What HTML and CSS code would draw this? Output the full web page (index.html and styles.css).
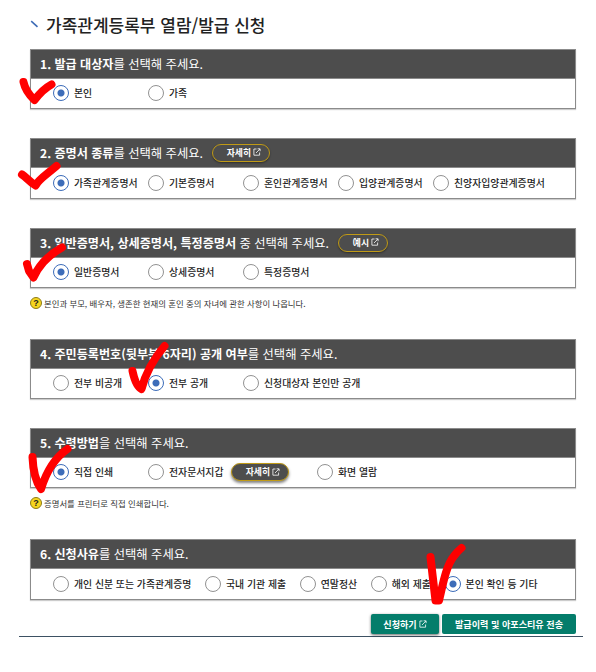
FILE: index.html
```html
<!DOCTYPE html>
<html lang="ko">
<head>
    <meta charset="UTF-8">
    <meta name="viewport" content="width=device-width, initial-scale=1.0">
    <title>가족관계등록부 열람/발급 신청</title>
    <link rel="stylesheet" href="styles.css">
</head>
<body>
    <svg class="defs" width="0" height="0">
        <symbol id="popup" viewBox="0 0 8 8">
            <path d="M3.5 1H.9v6.2h5.7V4.5M4.6.8h2.5v2.4M3 5l3.9-4" fill="none" stroke="currentColor" stroke-width=".8"/>
        </symbol>
    </svg>

    <form class="page">
        <h1>
            <svg class="title-mark" viewBox="0 0 9 8"><path d="M1.2 1.2L7.5 6.8" stroke="#3c6ab5" stroke-width="1.6"/></svg>
            가족관계등록부 열람/발급 신청
        </h1>

        <section class="step step-1">
            <h2><span><strong>1. 발급 대상자</strong>를 선택해 주세요.</span></h2>
            <div class="options">
                <label class="option"><input type="radio" name="target" checked>본인</label>
                <label class="option"><input type="radio" name="target">가족</label>
            </div>
        </section>

        <section class="step step-2">
            <h2>
                <span><strong>2. 증명서 종류</strong>를 선택해 주세요.</span>
                <button type="button" class="pill">자세히 <svg class="popup"><use href="#popup"/></svg></button>
            </h2>
            <div class="options">
                <label class="option"><input type="radio" name="kind" checked>가족관계증명서</label>
                <label class="option"><input type="radio" name="kind">기본증명서</label>
                <label class="option"><input type="radio" name="kind">혼인관계증명서</label>
                <label class="option"><input type="radio" name="kind">입양관계증명서</label>
                <label class="option"><input type="radio" name="kind">친양자입양관계증명서</label>
            </div>
        </section>

        <section class="step step-3">
            <h2>
                <span><strong>3. 일반증명서, 상세증명서, 특정증명서</strong> 중 선택해 주세요.</span>
                <button type="button" class="pill pill-short">예시 <svg class="popup"><use href="#popup"/></svg></button>
            </h2>
            <div class="options">
                <label class="option"><input type="radio" name="detail" checked>일반증명서</label>
                <label class="option"><input type="radio" name="detail">상세증명서</label>
                <label class="option"><input type="radio" name="detail">특정증명서</label>
            </div>
        </section>
        <p class="note"><span class="help">?</span>본인과 부모, 배우자, 생존한 현재의 혼인 중의 자녀에 관한 사항이 나옵니다.</p>

        <section class="step step-4">
            <h2><span><strong>4. 주민등록번호(뒷부분 6자리) 공개 여부</strong>를 선택해 주세요.</span></h2>
            <div class="options">
                <label class="option"><input type="radio" name="open">전부 비공개</label>
                <label class="option"><input type="radio" name="open" checked>전부 공개</label>
                <label class="option"><input type="radio" name="open">신청대상자 본인만 공개</label>
            </div>
        </section>

        <section class="step step-5">
            <h2><span><strong>5. 수령방법</strong>을 선택해 주세요.</span></h2>
            <div class="options">
                <label class="option"><input type="radio" name="receive" checked>직접 인쇄</label>
                <label class="option option-wallet"><input type="radio" name="receive">전자문서지갑</label>
                <button type="button" class="pill pill-light">자세히 <svg class="popup"><use href="#popup"/></svg></button>
                <label class="option"><input type="radio" name="receive">화면 열람</label>
            </div>
        </section>
        <p class="note"><span class="help">?</span>증명서를 프린터로 직접 인쇄합니다.</p>

        <section class="step step-6">
            <h2><span><strong>6. 신청사유</strong>를 선택해 주세요.</span></h2>
            <div class="options options-reason">
                <label class="option"><input type="radio" name="reason">개인 신분 또는 가족관계증명</label>
                <label class="option"><input type="radio" name="reason">국내 기관 제출</label>
                <label class="option"><input type="radio" name="reason">연말정산</label>
                <label class="option"><input type="radio" name="reason">해외 제출</label>
                <label class="option"><input type="radio" name="reason" checked>본인 확인 등 기타</label>
            </div>
        </section>

        <div class="actions">
            <button type="button" class="btn btn-apply">신청하기 <svg class="popup"><use href="#popup"/></svg></button>
            <button type="button" class="btn btn-history">발급이력 및 아포스티유 전송</button>
        </div>
    </form>

    <!-- 손으로 그린 체크 표시 -->
    <svg class="marks" viewBox="0 0 596 672">
        <path d="M23.5 82C25 89 28 94 34.5 100C40 93 45 88 51.5 84.5"/>
        <path d="M22 174.500C26 177 30 182 35.500 185.500C39 179 46 175 56.500 166"/>
        <path d="M27 264L29 271L33.500 277.500C38 267 47 256 62 247.500"/>
        <path d="M132.500 371C134 378 137 387 141.500 389C144 379 151 362 164.500 346"/>
        <path d="M32.500 457C33 470 36 482 41 489C45 476 53 459 67.500 449"/>
        <path d="M430.500 557C432 571 434 587 435.500 600.500L439 600.500C443 584 446 566 454 556C457 552 459 550 461.500 548"/>
    </svg>
</body>
</html>
```

FILE: styles.css
```css
* {
    box-sizing: border-box;
}
body {
    margin: 0;
    height: 672px;
    position: relative;
    overflow: hidden;
    background: #fff;
    color: #222;
    font-family: "Noto Sans CJK KR", sans-serif;
}
.defs {
    position: absolute;
}
.page {
    margin: 0 13px 0 19px;
    padding: 14px 7px 0 11px;
    height: 637px;
    border-bottom: 1px solid #3d5163;
}
h1 {
    display: flex;
    align-items: center;
    height: 20px;
    margin: 0 0 15px;
    font-size: 17px;
    font-weight: 500;
    white-space: nowrap;
    color: #222;
}
.title-mark {
    width: 9px;
    height: 8px;
    margin-right: 7px;
}
.step {
    width: 546px;
    height: 60px;
    border: 1px solid #8b8b8b;
    box-shadow: 0 1px 1px #ccc;
    margin-bottom: 29px;
}
.step-2 {
    height: 61px;
}
.step-3,
.step-5 {
    margin-bottom: 0;
}
.step-6 {
    height: 61px;
}
h2 {
    display: flex;
    align-items: center;
    gap: 9px;
    height: 29px;
    margin: 0;
    padding: 0 0 1px 9px;
    background: #4d4d4d;
    border-bottom: 1px solid #8b8b8b;
    color: #fff;
    font-size: 12.3px;
    font-weight: 400;
    white-space: nowrap;
}
h2 strong {
    font-size: 12.1px;
    font-weight: 700;
}
.options {
    display: flex;
    align-items: center;
    height: 28px;
    padding-left: 22px;
}
.option {
    display: flex;
    align-items: center;
    flex: none;
    width: 95px;
    font-size: 9.88px;
    line-height: 14px;
    font-weight: 500;
    white-space: nowrap;
}
.step-2 .options {
    height: 30px;
}
input[type="radio"] {
    appearance: none;
    flex: none;
    width: 16px;
    height: 16px;
    margin: 0 5px 0 0;
    border: 1px solid #929292;
    border-radius: 50%;
    background: #fff;
}
input[type="radio"]:checked {
    border-color: #3c6cb9;
    background: radial-gradient(circle, #3c6cb9 3px, #fff 4px);
}
button {
    font-family: inherit;
    cursor: pointer;
}
.pill {
    display: flex;
    align-items: center;
    justify-content: flex-end;
    flex: none;
    width: 58px;
    height: 18px;
    padding: 0 8px 1px 0;
    border: 1px solid #c09a16;
    border-radius: 9px;
    background: #4d4d4d;
    box-shadow: 0 1px 2px rgba(0,0,0,0.4);
    color: #fff;
    font-size: 8.8px;
    font-weight: 700;
}
.pill-short {
    width: 50px;
}
.popup {
    width: 8px;
    height: 8px;
    margin-left: 2px;
}
.option-wallet {
    width: 83px;
}
.pill-light {
    margin-right: 28px;
    box-shadow: 0 2px 3px rgba(0,0,0,0.5);
}
.note {
    display: flex;
    align-items: center;
    height: 12px;
    margin: 9px 0 30px;
    font-size: 8.4px;
    color: #333;
    white-space: nowrap;
}
.help {
    width: 12px;
    height: 12px;
    margin-right: 2px;
    border: 1px solid #8d7b18;
    border-radius: 50%;
    background: #f6d51f;
    color: #222;
    font: bold 9px/10px "Liberation Sans", sans-serif;
    text-align: center;
}
.options-reason {
    height: 30px;
}
.options-reason .option {
    width: auto;
    margin-right: 13.7px;
}
.actions {
    display: flex;
    justify-content: flex-end;
    gap: 3px;
    margin-top: -15px;
}
.btn {
    display: flex;
    align-items: center;
    justify-content: center;
    height: 20px;
    padding: 0 0 1px;
    border: 0;
    border-radius: 2px;
    background: #047d6b;
    color: #fff;
    font-size: 9.1px;
    font-weight: 700;
    white-space: nowrap;
}
.btn-apply {
    width: 68px;
    box-shadow: 0 1px 3px rgba(0,0,0,0.6);
}
.btn-history {
    width: 134px;
}
.marks {
    position: absolute;
    top: 0;
    left: 0;
    width: 596px;
    height: 672px;
    fill: none;
    stroke: #f00;
    stroke-width: 8;
    stroke-linecap: round;
    stroke-linejoin: round;
    pointer-events: none;
}
```
